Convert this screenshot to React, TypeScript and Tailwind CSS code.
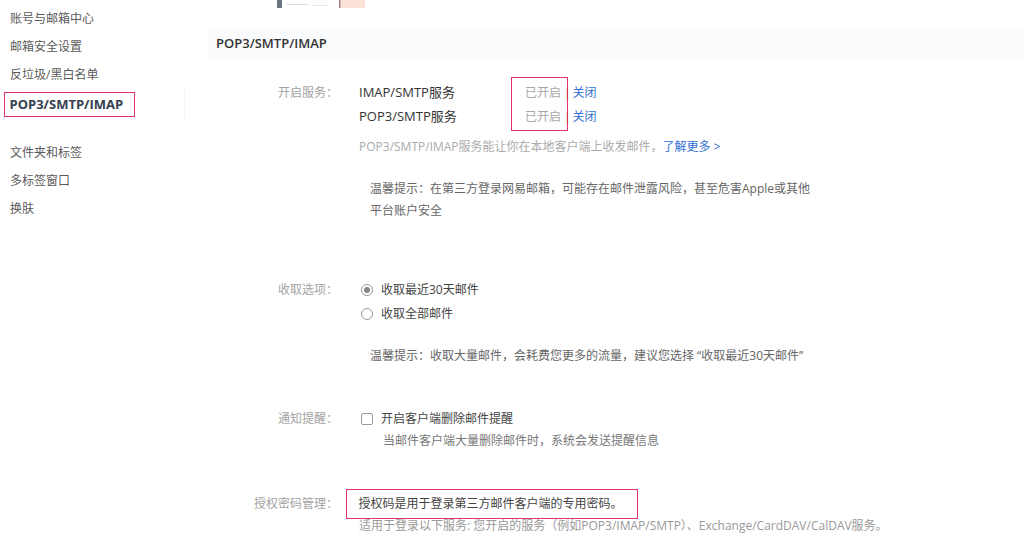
import React from "react";

const font = "font-['Open_Sans','Noto_Sans_CJK_SC',sans-serif]";

const menu = ["账号与邮箱中心", "邮箱安全设置", "反垃圾/黑白名单"];
const menu2 = ["文件夹和标签", "多标签窗口", "换肤"];

function Label({ text, className = "" }: { text: string; className?: string }) {
  return (
    <div className={`w-[131px] shrink-0 text-right text-[12px] text-[#a3a3a3] ${className}`}>
      {text}
    </div>
  );
}

function ServiceRow({ name }: { name: string }) {
  return (
    <div className="flex items-center h-6">
      <span className="w-[166px] text-[13px] text-[#333]">{name}</span>
      <span className="text-[12px] text-[#a8a8a8]">已开启</span>
      <span className="ml-[3px] text-[12px] text-[#555]">|</span>
      <span className="ml-[2px] text-[12px] text-[#2f6fd0]">关闭</span>
    </div>
  );
}

export default function App() {
  return (
    <div className={`w-[1025px] h-[536px] overflow-hidden bg-white flex ${font}`}>
      {/* Sidebar */}
      <div className="w-[185px] shrink-0 pt-[5px] text-[12px] text-[#5a5a5a]">
        {menu.map((m) => (
          <div key={m} className="h-7 leading-7 pl-[10px]">
            {m}
          </div>
        ))}
        <div className="flex items-center">
          <div className="ml-[4px] w-[131px] h-[25px] border-[1.5px] border-[#e0336b] pl-[4.5px] leading-[22px] text-[13px] font-bold text-[#35404f]">
            POP3/SMTP/IMAP
          </div>
          <div className="ml-[49px] w-px h-[30px] bg-[#f2f3f5]" />
        </div>
        <div className="mt-[20px]">
          {menu2.map((m) => (
            <div key={m} className="h-7 leading-7 pl-[10px]">
              {m}
            </div>
          ))}
        </div>
      </div>

      {/* Main */}
      <div className="ml-[22px] flex-1 relative">
        <div className="h-[8px] pl-[70px] flex">
          <svg width="90" height="8" viewBox="0 0 90 8">
            <rect x="0" y="0" width="5" height="8" fill="#6b7380" />
            <rect x="9" y="4" width="22" height="1" fill="#d9dce2" />
            <rect x="36" y="5" width="14" height="1" fill="#e4e6ea" />
            <rect x="62" y="0" width="1.5" height="8" fill="#a07d72" />
            <rect x="64" y="0" width="24" height="8" fill="#fbe3da" />
          </svg>
        </div>
        <div className="mt-[19px] h-[34px] bg-[#fafbfd] pl-[9px] flex items-center text-[13px] font-semibold text-[#333]">
          POP3/SMTP/IMAP
        </div>

        {/* 开启服务 */}
        <div className="flex pt-[20px]">
          <Label text="开启服务：" className="leading-6" />
          <div className="ml-[21px]">
            <ServiceRow name="IMAP/SMTP服务" />
            <ServiceRow name="POP3/SMTP服务" />
            <div className="mt-[6px] leading-6 text-[12px] text-[#ababab]">
              POP3/SMTP/IMAP服务能让你在本地客户端上收发邮件，
              <span className="text-[#2f6fd0]">了解更多 &gt;</span>
            </div>
            <div className="mt-[19px] pl-[11px] leading-[22px] text-[12px] text-[#666]">
              温馨提示：在第三方登录网易邮箱，可能存在邮件泄露风险，甚至危害Apple或其他
              <br />
              平台账户安全
            </div>
          </div>
        </div>

        {/* 收取选项 */}
        <div className="flex mt-[56px]">
          <Label text="收取选项：" className="leading-6" />
          <div className="ml-[21px] text-[12px] text-[#444]">
            <div className="flex items-center h-6">
              <span className="ml-[2px] w-[12px] h-[12px] rounded-full border border-[#999] flex items-center justify-center">
                <span className="w-[6px] h-[6px] rounded-full bg-[#888]" />
              </span>
              <span className="ml-[8px]">收取最近30天邮件</span>
            </div>
            <div className="flex items-center h-6">
              <span className="ml-[2px] w-[12px] h-[12px] rounded-full border border-[#999]" />
              <span className="ml-[8px]">收取全部邮件</span>
            </div>
            <div className="mt-[18px] pl-[11px] leading-6 text-[#666]">
              温馨提示：收取大量邮件，会耗费您更多的流量，建议您选择 “收取最近30天邮件”
            </div>
          </div>
        </div>

        {/* 通知提醒 */}
        <div className="flex mt-[40px]">
          <Label text="通知提醒：" className="leading-[22px]" />
          <div className="ml-[21px] text-[12px]">
            <div className="flex items-center h-[22px] text-[#444]">
              <span className="ml-[2px] w-[12px] h-[12px] rounded-[2px] border border-[#999]" />
              <span className="ml-[8px]">开启客户端删除邮件提醒</span>
            </div>
            <div className="pl-[24px] leading-[22px] text-[#777]">
              当邮件客户端大量删除邮件时，系统会发送提醒信息
            </div>
          </div>
        </div>

        {/* 授权密码管理 */}
        <div className="flex mt-[37px]">
          <Label text="授权密码管理：" className="leading-[30px]" />
          <div className="ml-[21px] text-[12px]">
            <div className="-ml-[13px] w-[292px] h-[30px] border-[1.5px] border-[#e0336b] pl-[11.5px] leading-[27px] text-[#444]">
              授权码是用于登录第三方邮件客户端的专用密码。
            </div>
            <div className="leading-[14px] text-[#999]">
              适用于登录以下服务: 您开启的服务（例如POP3/IMAP/SMTP）、Exchange/CardDAV/CalDAV服务。
            </div>
          </div>
        </div>

        {/* annotation box over status column */}
        <div className="absolute left-[304px] top-[77px] w-[57px] h-[54px] border-[1.5px] border-[#e0336b]" />
      </div>
    </div>
  );
}
